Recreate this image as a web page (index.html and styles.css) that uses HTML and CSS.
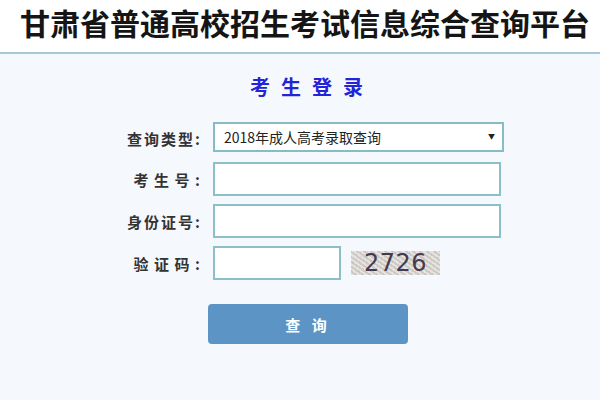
FILE: index.html
```html
<!DOCTYPE html>
<html lang="zh-CN">
<head>
<meta charset="utf-8">
<title>甘肃省普通高校招生考试信息综合查询平台</title>
<link rel="stylesheet" href="styles.css">
</head>
<body>
<header class="top">
  <h1 class="site-title">甘肃省普通高校招生考试信息综合查询平台</h1>
</header>
<main class="main">
  <h2 class="login-title">考生登录</h2>
  <form class="form">
    <label class="label">查询类型:</label>
    <div class="select-wrap">
      <div class="select">2018年成人高考录取查询</div>
      <span class="arrow">▼</span>
    </div>
    <label class="label label-wide">考生号:</label>
    <div class="field"><input class="input" type="text"></div>
    <label class="label">身份证号:</label>
    <div class="field"><input class="input" type="text"></div>
    <label class="label label-wide">验证码:</label>
    <div class="field captcha-row">
      <input class="input input-short" type="text">
      <div class="captcha">2726</div>
    </div>
  </form>
  <div class="btn-row"><button class="btn" type="button">查 询</button></div>
</main>
</body>
</html>
```

FILE: styles.css
```css
html, body {
  margin: 0;
  padding: 0;
  height: 100%;
}
body {
  font-family: "Noto Sans CJK SC", "Noto Sans", sans-serif;
  background: #f5f8fc;
  color: #333;
}
.top {
  height: 52px;
  background: #ffffff;
  border-bottom: 2px solid #a9c7dc;
  display: flex;
  align-items: center;
  padding-left: 20px;
}
.site-title {
  margin: -8px 0 0 0;
  font-size: 30px;
  line-height: 34px;
  font-weight: 700;
  color: #151515;
  white-space: nowrap;
}
.main {
  background: #f5f8fc;
  padding-top: 21px;
}
.login-title {
  margin: 0;
  text-align: center;
  font-size: 20px;
  line-height: 24px;
  font-weight: 700;
  color: #2323d8;
  letter-spacing: 11px;
  padding-left: 24px;
}
.form {
  margin: 23px 0 0 113px;
  display: grid;
  grid-template-columns: 88px auto;
  column-gap: 12px;
  row-gap: 8px;
  align-items: center;
}
.label {
  text-align: right;
  font-size: 15px;
  font-weight: 700;
  color: #333;
  letter-spacing: 2px;
  margin-right: -1px;
  white-space: nowrap;
}
.label-wide {
  letter-spacing: 5.5px;
  margin-right: -4.5px;
}
.select-wrap {
  position: relative;
  width: 291px;
  height: 30px;
  margin-bottom: 2px;
}
.select {
  box-sizing: border-box;
  width: 291px;
  height: 30px;
  border: 2px solid #86bcc6;
  background: #fff;
  font-size: 14px;
  line-height: 26px;
  padding-left: 9px;
  color: #222;
}
.arrow {
  position: absolute;
  right: 9px;
  top: 10px;
  font-size: 7px;
  line-height: 9px;
  color: #222;
}
.field {
  display: flex;
  align-items: center;
}
.input {
  box-sizing: border-box;
  width: 288px;
  height: 34px;
  border: 2px solid #8cc0c8;
  background: #fff;
  margin: 0;
  padding: 0 6px;
  outline: none;
}
.input-short {
  width: 128px;
}
.captcha-row {
  gap: 10px;
}
.captcha {
  width: 89px;
  height: 24px;
  background-color: #d8d5d0;
  background-image:
    repeating-linear-gradient(35deg, rgba(255,255,255,0.35) 0 2px, rgba(180,170,150,0.25) 2px 4px),
    repeating-linear-gradient(-40deg, rgba(200,190,210,0.3) 0 1px, transparent 1px 5px);
  font-family: "DejaVu Sans", sans-serif;
  font-size: 24px;
  line-height: 24px;
  color: #463a50;
  text-align: center;
  letter-spacing: 0.5px;
}
.btn-row {
  margin-top: 24px;
  padding-left: 208px;
}
.btn {
  width: 200px;
  height: 40px;
  border: none;
  border-radius: 4px;
  background: #5b94c5;
  color: #fff;
  font-family: "Noto Sans CJK SC", sans-serif;
  font-size: 15px;
  font-weight: 700;
  letter-spacing: 4px;
  padding: 0;
}
```
